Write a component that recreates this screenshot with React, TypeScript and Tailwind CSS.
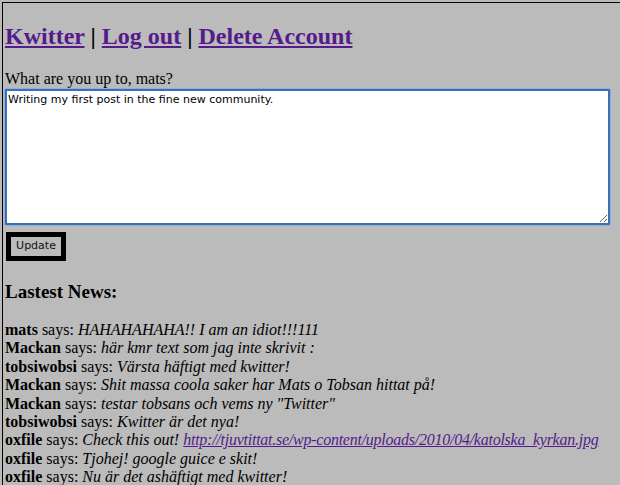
const news: { user: string; text: string; link?: string }[] = [
  { user: 'mats', text: 'HAHAHAHAHA!! I am an idiot!!!111' },
  { user: 'Mackan', text: 'här kmr text som jag inte skrivit :' },
  { user: 'tobsiwobsi', text: 'Värsta häftigt med kwitter!' },
  { user: 'Mackan', text: 'Shit massa coola saker har Mats o Tobsan hittat på!' },
  { user: 'Mackan', text: 'testar tobsans och vems ny "Twitter"' },
  { user: 'tobsiwobsi', text: 'Kwitter är det nya!' },
  { user: 'oxfile', text: 'Check this out! ', link: 'http://tjuvtittat.se/wp-content/uploads/2010/04/katolska_kyrkan.jpg' },
  { user: 'oxfile', text: 'Tjohej! google guice e skit!' },
  { user: 'oxfile', text: 'Nu är det ashäftigt med kwitter!' },
]

export default function App() {
  return (
    <div className="min-h-screen bg-[#bbbbbb] pt-[2px] pl-[2px] overflow-hidden font-['Liberation_Serif',serif] text-black">
      <div className="border-l border-t border-black pl-[2px] pb-10">
        <h2 className="text-[24px] font-bold leading-[28px] pt-[19px] mb-[20px]">
          <a href="#" className="text-[#551a8b] underline">Kwitter</a>
          {' | '}
          <a href="#" className="text-[#551a8b] underline">Log out</a>
          {' | '}
          <a href="#" className="text-[#551a8b] underline">Delete Account</a>
        </h2>
        <div className="text-[16px] leading-[18px]">What are you up to, mats?</div>
        <textarea
          defaultValue="Writing my first post in the fine new community."
          className="block w-[605px] h-[136px] mt-[1px] bg-white border-2 border-[#3d6eb4] rounded-[1px] shadow-[0_0_0_1px_#8ab0e0] px-[1px] py-[2px] font-['DejaVu_Sans',sans-serif] text-[11px] leading-[13px] text-black resize-y outline-none"
        />
        <button className="mt-[7px] ml-[1px] h-[29px] w-[60px] border-[5px] border-black bg-[#bbbbbb] font-['DejaVu_Sans',sans-serif] text-[11px] text-[#111]">
          Update
        </button>
        <h3 className="text-[19px] font-bold leading-[22px] mt-[20px] mb-[18px]">Lastest News:</h3>
        <div className="text-[16px] leading-[18.4px]">
          {news.map((n, i) => (
            <div key={i} className="whitespace-nowrap">
              <b>{n.user}</b> says: <i>{n.text}</i>
              {n.link && (
                <a href="#" className="text-[#551a8b] underline italic tracking-[-0.25px]">{n.link}</a>
              )}
            </div>
          ))}
        </div>
      </div>
    </div>
  )
}
